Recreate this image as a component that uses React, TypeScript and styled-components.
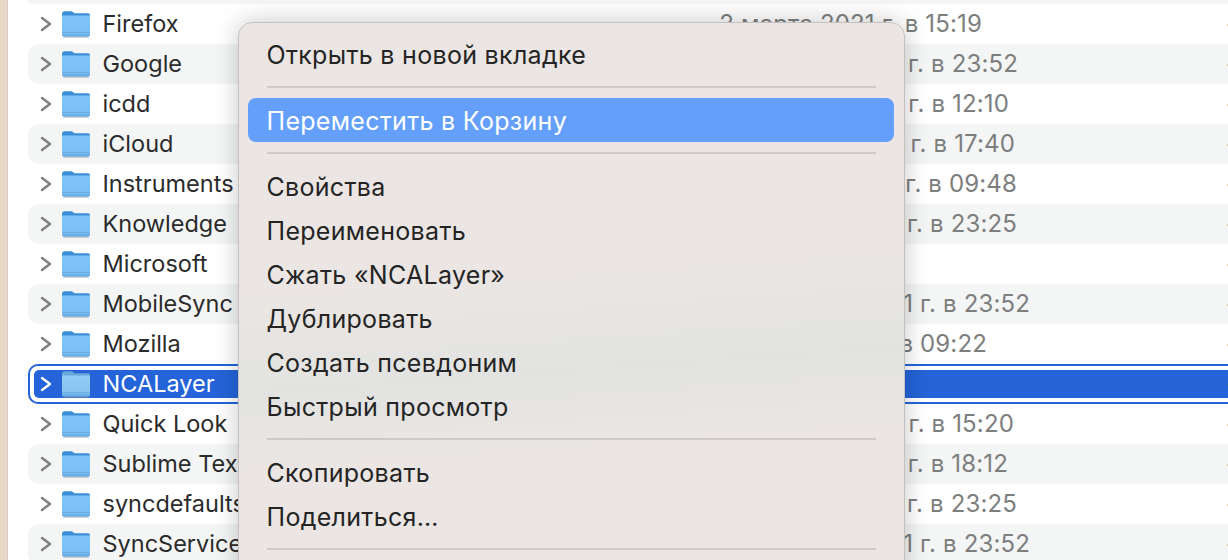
import React from "react";
import styled, { createGlobalStyle } from "styled-components";

const GlobalStyle = createGlobalStyle`
  html, body {
    margin: 0;
    height: 100%;
    overflow: hidden;
    background: #fff;
    font-family: Inter, "Liberation Sans", sans-serif;
  }
`;

const Page = styled.div`
  position: relative;
  display: flex;
  width: 1228px;
  height: 560px;
  overflow: hidden;
`;

const Wallpaper = styled.div`
  flex: 0 0 7px;
  background: #e8d9c7;
  border-right: 1px solid #d5cdc3;
`;

const List = styled.div`
  flex: 1;
  display: flex;
  flex-direction: column;
  padding-left: 20px;
  min-width: 0;
`;

const TopStrip = styled.div`
  flex: 0 0 4px;
  background: #f4f5f5;
  border-bottom-left-radius: 10px;
`;

const Row = styled.div<{ $striped?: boolean; $selected?: boolean }>`
  position: relative;
  flex: 0 0 40px;
  display: flex;
  align-items: center;
  box-sizing: border-box;
  padding-left: 12px;
  white-space: nowrap;
  color: ${(p) => (p.$selected ? "#fff" : "#2b2b2b")};
  background: ${(p) => (p.$striped ? "#f4f5f5" : "#fff")};
  border-radius: 10px 0 0 10px;
`;

const SelectedFrame = styled.div`
  position: absolute;
  inset: 0;
  box-sizing: border-box;
  border: 2px solid #2463d8;
  border-right: none;
  border-radius: 10px 0 0 10px;
  background: #fff;
`;

const SelectedFill = styled.div`
  position: absolute;
  inset: 4px 0 4px 4px;
  background: #2463d8;
  border-radius: 5px 0 0 5px;
`;

const Chevron = styled.svg`
  position: relative;
  flex: 0 0 12px;
  width: 12px;
  height: 16px;
  margin-right: 10px;
`;

const FolderIcon = styled.svg`
  position: relative;
  flex: 0 0 30px;
  width: 30px;
  height: 28px;
  margin-left: -1px;
  margin-right: 11.5px;
`;

const Name = styled.span`
  position: relative;
  flex: 0 0 618.5px;
  padding-bottom: 2px;
  font-size: 23.5px;
`;

const DateCell = styled.span<{ $end: number }>`
  flex: 0 0 ${(p) => p.$end - 721}px;
  min-width: 0;
  display: flex;
  justify-content: flex-end;
  padding-bottom: 2px;
  font-size: 24px;
  letter-spacing: 0.15px;
  color: #7d7e7e;
`;

const SizeCell = styled.span`
  position: absolute;
  left: 1198px;
  padding-bottom: 2px;
  font-size: 24px;
  color: #7d7e7e;
`;

const Menu = styled.div`
  position: absolute;
  left: 238px;
  top: 22px;
  width: 667px;
  height: 580px;
  box-sizing: border-box;
  padding: 10px 10px 10px 9px;
  border: 1px solid #c4c0bd;
  border-radius: 14px;
  background: linear-gradient(
    176deg,
    #ebe6e3 0,
    #ebe6e3 270px,
    #e2e3e1 370px,
    #ebe6e3 450px
  );
  box-shadow: 0 0 24px rgba(0, 0, 0, 0.22);
  font-size: 25px;
  letter-spacing: 0.3px;
  color: #242424;
`;

const MenuItem = styled.div<{ $active?: boolean }>`
  height: 44px;
  display: flex;
  align-items: center;
  padding: ${(p) => (p.$active ? "2px" : "0")} 0 0 18.5px;
  box-sizing: border-box;
  border-radius: 8px;
  color: ${(p) => (p.$active ? "#fff" : "inherit")};
  background: ${(p) => (p.$active ? "#64a0fb" : "transparent")};
`;

const Separator = styled.div<{ $before: number; $after: number }>`
  height: 2px;
  margin: ${(p) => p.$before}px 18px ${(p) => p.$after}px 19px;
  background: #cfcac6;
`;

const Arrow = ({ light }: { light?: boolean }) => (
  <Chevron viewBox="0 0 12 16">
    <path
      d="M2 2l8 6-8 6"
      fill="none"
      stroke={light ? "#fff" : "#7f7f7f"}
      strokeWidth="2.4"
      strokeLinecap="round"
      strokeLinejoin="round"
    />
  </Chevron>
);

const Folder = ({ id, dim }: { id: string; dim?: boolean }) => (
  <FolderIcon viewBox="0 0 30 28">
    <defs>
      <linearGradient id={id} x1="0" y1="0" x2="0" y2="1">
        <stop offset="0" stopColor={dim ? "#8fcbf4" : "#80c5f9"} />
        <stop offset="1" stopColor={dim ? "#86c2ef" : "#78bef7"} />
      </linearGradient>
    </defs>
    <path
      d="M1 4C1 2.300 2 1.200 3.800 1.200h6c1.200 0 1.800.4 2.500 1.100l1 1H27c1.300 0 2 .8 2 2.200v4H1z"
      fill={dim ? "#6aa8dc" : "#3d8ed8"}
    />
    <path
      d="M1 5.500h28V24.500c0 1.200-.8 2-2 2H3c-1.200 0-2-.8-2-2z"
      fill={`url(#${id})`}
    />
    <path d="M1 22h28v2.500c0 1.200-.8 2-2 2H3c-1.200 0-2-.8-2-2z" fill="#66ade8" />
    <path d="M1 23.800h28" stroke="#8cc6f2" strokeWidth="0.8" />
    <path d="M2 27.200h26" stroke="#8b949c" strokeWidth="1" opacity="0.6" />
  </FolderIcon>
);

const rows = [
  { name: "Firefox", date: "2 марта 2021 г. в 15:19", end: 982 },
  { name: "Google", date: "14 февраля 2021 г. в 23:52", end: 1018 },
  { name: "icdd", date: "9 февраля 2021 г. в 12:10", end: 1009 },
  { name: "iCloud", date: "11 февраля 2021 г. в 17:40", end: 1015 },
  { name: "Instruments", date: "12 февраля 2021 г. в 09:48", end: 1017 },
  { name: "Knowledge", date: "14 февраля 2021 г. в 23:25", end: 1017 },
  { name: "Microsoft", date: "", end: 722 },
  { name: "MobileSync", date: "14 сентября 2021 г. в 23:52", end: 1030 },
  { name: "Mozilla", date: "2 марта 2021 г. в 09:22", end: 987 },
  { name: "NCALayer", date: "", end: 722 },
  { name: "Quick Look", date: "11 февраля 2021 г. в 15:20", end: 1014 },
  { name: "Sublime Text 3", date: "9 февраля 2021 г. в 18:12", end: 1008 },
  { name: "syncdefaultsd", date: "14 февраля 2021 г. в 23:25", end: 1017 },
  { name: "SyncServices", date: "14 сентября 2021 г. в 23:52", end: 1030 },
];

export default function App() {
  return (
    <Page>
      <GlobalStyle />
      <Wallpaper />
      <List>
        <TopStrip />
        {rows.map((row, i) => {
          const selected = row.name === "NCALayer";
          return (
            <Row key={row.name} $striped={i % 2 === 1} $selected={selected}>
              {selected && (
                <SelectedFrame>
                  <SelectedFill />
                </SelectedFrame>
              )}
              <Arrow light={selected} />
              <Folder id={`folder-${i}`} dim={selected} />
              <Name>{row.name}</Name>
              <DateCell $end={row.end}>{row.date}</DateCell>
              <SizeCell>--</SizeCell>
            </Row>
          );
        })}
      </List>
      <Menu>
        <MenuItem>Открыть в новой вкладке</MenuItem>
        <Separator $before={9} $after={10} />
        <MenuItem $active>Переместить в Корзину</MenuItem>
        <Separator $before={10} $after={11} />
        <MenuItem>Свойства</MenuItem>
        <MenuItem>Переименовать</MenuItem>
        <MenuItem>Сжать «NCALayer»</MenuItem>
        <MenuItem>Дублировать</MenuItem>
        <MenuItem>Создать псевдоним</MenuItem>
        <MenuItem>Быстрый просмотр</MenuItem>
        <Separator $before={9} $after={11} />
        <MenuItem>Скопировать</MenuItem>
        <MenuItem>Поделиться…</MenuItem>
        <Separator $before={9} $after={10} />
      </Menu>
    </Page>
  );
}
